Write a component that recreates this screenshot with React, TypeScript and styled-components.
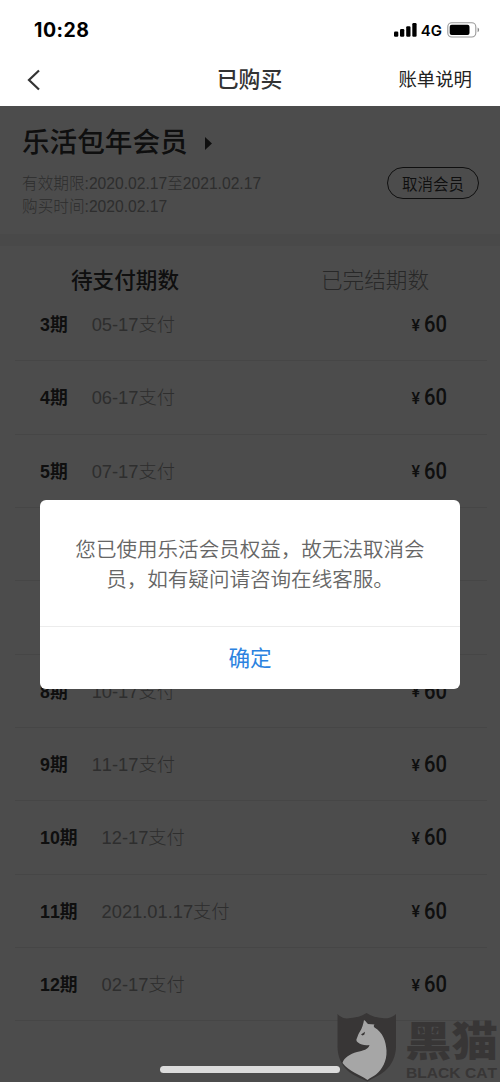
import React from 'react';
import styled, { createGlobalStyle } from 'styled-components';

const GlobalStyle = createGlobalStyle`
  * { box-sizing: border-box; }
  body { margin: 0; background: #fff; }
`;

const Screen = styled.div`
  position: relative;
  width: 500px;
  height: 1082px;
  overflow: hidden;
  background: #fff;
  color: #333;
  font-family: "Liberation Sans", "Noto Sans CJK SC", sans-serif;
  font-kerning: none;
`;

const StatusBar = styled.div`
  display: flex;
  align-items: center;
  height: 60px;
  padding: 0 20px 0 34px;
  color: #000;
  font-family: Inter, sans-serif;
`;

const Clock = styled.span`
  flex: 1;
  font-size: 19.5px;
  font-weight: 700;
  letter-spacing: 0.5px;
`;

const Network = styled.span`
  margin: 0 5px 0 4px;
  font-size: 15px;
  font-weight: 600;
`;

const NavBar = styled.header`
  display: grid;
  grid-template-columns: 1fr auto 1fr;
  align-items: center;
  height: 46px;
  padding: 0 28px 6px 27px;
`;

const NavTitle = styled.h1`
  margin: 0;
  font-size: 21.8px;
  font-weight: 500;
  line-height: 30px;
`;

const NavLink = styled.span`
  justify-self: end;
  color: #222;
  font-size: 18.4px;
  line-height: 30px;
`;

const Page = styled.main`
  position: relative;
  height: 976px;
`;

const Membership = styled.section`
  display: flex;
  justify-content: space-between;
  height: 140px;
  padding: 18px 21px 0 22px;
  border-bottom: 12px solid #f6f6f6;
`;

const PlanName = styled.h2`
  display: flex;
  align-items: center;
  gap: 17px;
  margin: 0 0 10px;
  font-size: 27.6px;
  font-weight: 500;
  line-height: 38px;
`;

const PlanDetail = styled.p`
  margin: 0;
  color: #999;
  font-size: 15.65px;
  font-weight: 300;
  line-height: 23px;
  white-space: nowrap;
`;

const CancelButton = styled.button`
  width: 92px;
  height: 32px;
  margin-top: 43px;
  padding: 0 0 0;
  border: 1.5px solid #333;
  border-radius: 16px;
  background: none;
  color: #333;
  font-family: inherit;
  font-size: 15.5px;
  font-weight: 350;
  white-space: nowrap;
`;

const Tabs = styled.nav`
  display: grid;
  grid-template-columns: 1fr 1fr;
  height: 42px;
  padding-top: 19px;
`;

const Tab = styled.span<{ $active?: boolean }>`
  color: ${p => (p.$active ? '#333' : '#888')};
  font-size: 21.6px;
  font-weight: ${p => (p.$active ? 500 : 300)};
  line-height: 32px;
  text-align: center;
`;

const Periods = styled.ul`
  margin: 0;
  padding: 0 13px 0 15px;
  list-style: none;
`;

const Period = styled.li`
  display: flex;
  align-items: center;
  height: 73.33px;
  padding: 0 40px 2px 25px;
  border-bottom: 1px solid #e9e9e9;
`;

const PeriodName = styled.b`
  margin-right: 24px;
  font-size: 17.8px;
`;

const PeriodDate = styled.span`
  flex: 1;
  color: #999;
  font-size: 18.3px;
  font-weight: 300;
`;

const Currency = styled.span`
  padding-top: 4px;
  margin-right: 4px;
  font-family: Roboto, sans-serif;
  font-size: 16px;
  font-weight: 500;
`;

const Amount = styled.span`
  width: 23px;
  padding-top: 2px;
  font-family: Roboto, sans-serif;
  font-size: 23.5px;
  font-weight: 500;
  transform: scaleX(0.86);
  transform-origin: left;
`;

const Mask = styled.div`
  position: absolute;
  inset: 0;
  background: rgba(0, 0, 0, 0.7);
`;

const Dialog = styled.div`
  position: absolute;
  top: 500px;
  left: 40px;
  width: 420px;
  height: 189px;
  border-radius: 6px;
  background: #fff;
`;

const Message = styled.p`
  height: 127px;
  margin: 0;
  padding: 32.5px 34px 0;
  border-bottom: 1px solid #ececec;
  color: #666;
  font-family: "Noto Sans CJK SC", sans-serif;
  font-size: 20.55px;
  font-weight: 350;
  line-height: 30px;
  text-align: center;
`;

const Confirm = styled.button`
  width: 100%;
  height: 62px;
  padding: 0 0 4px;
  border: 0;
  background: none;
  color: #2b82e0;
  font-family: "Noto Sans CJK SC", sans-serif;
  font-size: 21.6px;
`;

const HomeIndicator = styled.div`
  position: absolute;
  top: 1066px;
  left: 160px;
  width: 180px;
  height: 7px;
  border-radius: 4px;
  background: #dcdcdc;
`;

const Watermark = styled.svg`
  position: absolute;
  top: 1004px;
  left: 330px;
`;

const periods = [
  ['3期', '05-17支付'],
  ['4期', '06-17支付'],
  ['5期', '07-17支付'],
  ['6期', '08-17支付'],
  ['7期', '09-17支付'],
  ['8期', '10-17支付'],
  ['9期', '11-17支付'],
  ['10期', '12-17支付'],
  ['11期', '2021.01.17支付'],
  ['12期', '02-17支付'],
];

export default function App() {
  return (
    <Screen>
      <GlobalStyle />
      <StatusBar>
        <Clock>10:28</Clock>
        <svg width="23" height="14" viewBox="0 0 23 14">
          <rect x="0" y="8.5" width="4.3" height="5.2" rx="1.2" />
          <rect x="6" y="6" width="4.3" height="7.7" rx="1.2" />
          <rect x="12.2" y="3.2" width="4.3" height="10.5" rx="1.2" />
          <rect x="18.3" y="0" width="4.3" height="13.7" rx="1.2" />
        </svg>
        <Network>4G</Network>
        <svg width="33" height="16" viewBox="0 0 33 16">
          <rect x="0.8" y="0.8" width="28" height="14.2" rx="4" fill="none" stroke="#999" strokeWidth="1.1" />
          <rect x="2.7" y="2.7" width="19.8" height="10.4" rx="2" />
          <path d="M30.6 5.6c2 .8 2 3.900 0 4.700z" fill="#888" />
        </svg>
      </StatusBar>
      <NavBar>
        <svg width="14" height="22" viewBox="0 0 14 22" fill="none" stroke="#333" strokeWidth="2.2">
          <path d="M12 1.500L2 11l10 9.500" />
        </svg>
        <NavTitle>已购买</NavTitle>
        <NavLink>账单说明</NavLink>
      </NavBar>
      <Page>
        <Membership>
          <div>
            <PlanName>
              乐活包年会员
              <svg width="7" height="13" viewBox="0 0 7 13">
                <path d="M0 0l7 6.500-7 6.500z" fill="#333" />
              </svg>
            </PlanName>
            <PlanDetail>有效期限:2020.02.17至2021.02.17</PlanDetail>
            <PlanDetail>购买时间:2020.02.17</PlanDetail>
          </div>
          <CancelButton>取消会员</CancelButton>
        </Membership>
        <Tabs>
          <Tab $active>待支付期数</Tab>
          <Tab>已完结期数</Tab>
        </Tabs>
        <Periods>
          {periods.map(([name, date]) => (
            <Period key={name}>
              <PeriodName>{name}</PeriodName>
              <PeriodDate>{date}</PeriodDate>
              <Currency>¥</Currency>
              <Amount>60</Amount>
            </Period>
          ))}
        </Periods>
        <Mask />
      </Page>
      <Dialog role="dialog">
        <Message>您已使用乐活会员权益，故无法取消会员，如有疑问请咨询在线客服。</Message>
        <Confirm>确定</Confirm>
      </Dialog>
      <HomeIndicator />
      <Watermark width="170" height="78" viewBox="0 0 170 78">
        <path
          d="M7.500 10C12 14.500 16 15 20.500 14 26 13.500 31 12.500 36.500 9 42 12.500 47 13.500 52 14 57 15 61.500 14 66 10V42C66 52 62 61 55 67 49 72 43 74 37.500 77.500 30 74 24 72 18 67 11 61 7.500 52 7.500 42Z"
          fill="#383636"
        />
        <path
          d="M34 16.500C36 18 37 19.500 38 20.500L44.500 21C43.500 22 43.500 23 44.500 24 53 29 56 38 56.500 47 57 58 52 66 46 71 43 73 40 74.500 37.500 76.500 30 71 19 68 12.500 59.500 14 54 20 50.500 27 48.500 33 47 38.500 46 39.500 41.500 35 42 31 41.500 28 39 26 37.500 26 36 27 34.500 28 32 28.500 30 30 28 32 25 33.500 20 34 16.500Z"
          fill="#a6a6a6"
          transform="translate(0 -0.5)"
        />
        <path d="M31 30.500l4-2.800-.6 2.800-1.800 1z" fill="#383636" />
        <g fill="#383636">
          <text x="75" y="52" fontFamily="Noto Sans CJK SC, sans-serif" fontWeight="900" fontSize="41" textLength="93" lengthAdjust="spacingAndGlyphs">黑猫</text>
          <text x="76" y="74" fontFamily="Liberation Sans, sans-serif" fontWeight="700" fontSize="14" textLength="91" lengthAdjust="spacingAndGlyphs">BLACK CAT</text>
        </g>
      </Watermark>
    </Screen>
  );
}
